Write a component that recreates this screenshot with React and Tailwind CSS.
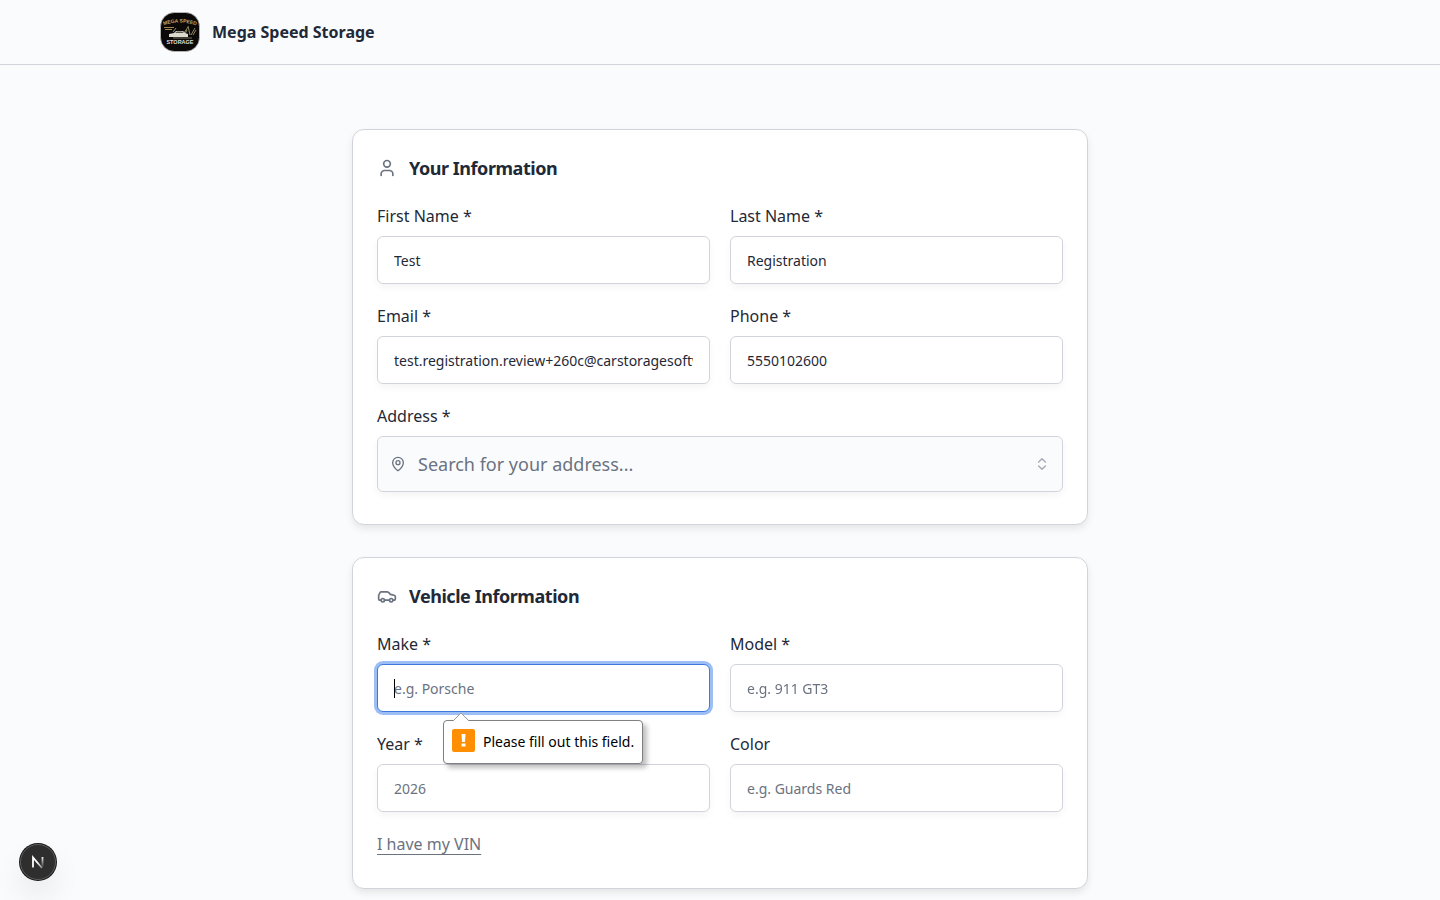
import React from "react";
import { Car, ChevronsUpDown, MapPin, User } from "lucide-react";

const inputBase =
  "h-12 w-full rounded-md border bg-white px-4 text-sm text-[#1f2937] placeholder:text-[#6b7280] outline-none";

function Field({ id, label, active, children, ...props }) {
  return (
    <div className="flex min-w-0 flex-col gap-2">
      <label htmlFor={id} className="self-start text-base">
        {label}
      </label>
      <div className="relative">
        <input
          id={id}
          className={`${inputBase} ${
            active
              ? "border-[#3b7bdc] caret-transparent ring-3 ring-[#9dbdf5]"
              : "border-[#d1d5db] shadow-[0_4px_8px_-1px_rgba(0,0,0,0.05)]"
          }`}
          {...props}
        />
        {active && (
          <span className="pointer-events-none absolute top-[15px] left-[17px] h-[19px] w-px bg-black" />
        )}
        {children}
      </div>
    </div>
  );
}

function Card({ icon: Icon, title, children }) {
  return (
    <section className="rounded-xl border border-[#d1d5db] bg-white px-6 pt-6 pb-8 shadow-[0_4px_8px_-1px_rgba(0,0,0,0.1)]">
      <div className="mb-[22px] flex items-center gap-3">
        <Icon className="size-5 text-[#6b7280]" strokeWidth={2} />
        <h2 className="text-lg font-bold tracking-tight">{title}</h2>
      </div>
      <div className="grid grid-cols-2 gap-5">{children}</div>
    </section>
  );
}

function Logo() {
  return (
    <svg viewBox="0 0 40 40" className="size-10" role="img" aria-label="Mega Speed Storage">
      <defs>
        <path id="logo-arc" d="M2 14 Q20 7 38 14" />
      </defs>
      <rect x="0.5" y="0.5" width="39" height="39" rx="14" fill="#0b0a08" stroke="#c9cacb" strokeOpacity="0.7" />
      <text fontFamily="Liberation Sans, sans-serif" fontSize="5" fontWeight="700" fill="#c4ab70" textAnchor="middle">
        <textPath href="#logo-arc" startOffset="50%">MEGA SPEED</textPath>
      </text>
      <path d="M4 15.500h10M5 17.500h7" stroke="#a1864c" strokeWidth="1.200" />
      <path d="M13 20l3-4M24 21l4-6M28 14l2 9M31 23l4-7M24 24l3-6M33 23l3-5" stroke="#a3946c" strokeWidth="0.9" />
      <path d="M9 22l5-1 2-2h7l2 2 3 1v3H9z" fill="#dcd9cf" />
      <path d="M15 21l2-1.500h5l2 1.500z" fill="#5a564b" />
      <path d="M13 26h19" stroke="#77705c" strokeWidth="1" />
      <text x="20" y="32" fontFamily="Liberation Sans, sans-serif" fontSize="5.500" fontWeight="700" fill="#e2dfd5" textAnchor="middle">
        STORAGE
      </text>
    </svg>
  );
}

// validation bubble shown under a required field
function ValidationBubble({ id, message }) {
  return (
    <div
      id={id}
      role="alert"
      className="absolute top-full left-[66px] z-10 mt-2 flex h-11 items-center gap-2 rounded border border-[#808080] bg-white px-2 text-sm whitespace-nowrap text-black shadow-[4px_4px_5px_rgba(0,0,0,0.25)]"
    >
      <svg viewBox="0 0 16 9" className="absolute -top-[9px] left-[9px] h-[9px] w-4">
        <path d="M0 9L8 1L16 9" fill="#fff" stroke="#9c9c9c" />
      </svg>
      <svg viewBox="0 0 23 23" className="-mt-1 size-[23px]" aria-hidden="true">
        <rect width="23" height="23" rx="2" fill="#ff8f00" />
        <path d="M9.500 5h4l-0.500 8h-3z" fill="#fff" />
        <path d="M9.500 14.500h4v3h-4z" fill="#fff" />
      </svg>
      <span>{message}</span>
    </div>
  );
}

export default function App() {
  return (
    <div className="min-h-screen bg-[#fafbfd] font-['Noto_Sans',sans-serif] text-[#1f2937]">
      <header className="border-b border-[#d1d5db]">
        <div className="mx-auto flex h-16 max-w-6xl items-center gap-3 px-4">
          <Logo />
          <span className="font-bold">Mega Speed Storage</span>
        </div>
      </header>

      <main className="mx-auto max-w-3xl px-4 pt-16">
        <form className="flex flex-col gap-8" noValidate>
          <Card icon={User} title="Your Information">
            <Field id="firstName" label="First Name *" defaultValue="Test" />
            <Field id="lastName" label="Last Name *" defaultValue="Registration" />
            <Field
              id="email"
              label="Email *"
              type="email"
              defaultValue="test.registration.review+260c@carstoragesoftware.com"
            />
            <Field id="phone" label="Phone *" type="tel" defaultValue="5550102600" />
            <div className="col-span-2 flex flex-col gap-2">
              <label htmlFor="address" className="self-start">
                Address *
              </label>
              <button
                id="address"
                type="button"
                className="flex h-14 w-full items-center gap-3 rounded-md border border-[#d1d5db] bg-[#fafbfd] px-3 text-lg text-[#6b7280] shadow-[0_4px_8px_-1px_rgba(0,0,0,0.05)]"
              >
                <MapPin className="size-4" />
                <span className="flex-1 text-left">Search for your address...</span>
                <ChevronsUpDown className="size-4 opacity-60" />
              </button>
            </div>
          </Card>

          <Card icon={Car} title="Vehicle Information">
            <Field
              id="make"
              label="Make *"
              placeholder="e.g. Porsche"
              aria-describedby="make-error"
              autoFocus
              active
            >
              <ValidationBubble id="make-error" message="Please fill out this field." />
            </Field>
            <Field id="model" label="Model *" placeholder="e.g. 911 GT3" />
            <Field id="year" label="Year *" placeholder="2026" />
            <Field id="color" label="Color" placeholder="e.g. Guards Red" />
            <div className="col-span-2 flex">
              <button type="button" className="text-[#6b7280] underline underline-offset-4">
                I have my VIN
              </button>
            </div>
          </Card>
        </form>
      </main>

      <button
        type="button"
        aria-label="Open Next.js Dev Tools"
        className="fixed bottom-5 left-5 flex size-9 items-center justify-center rounded-full bg-[#2e2e2e] ring-1 ring-[#171717] shadow-[0_16px_32px_-8px_rgba(0,0,0,0.24)]"
      >
        <svg viewBox="0 0 36 36" className="size-9" fill="none">
          <defs>
            <linearGradient id="n-diag" x1="18" y1="18" x2="24" y2="26" gradientUnits="userSpaceOnUse">
              <stop stopColor="#fff" />
              <stop offset="1" stopColor="#fff" stopOpacity="0.2" />
            </linearGradient>
            <linearGradient id="n-stem" x1="22" y1="12" x2="22" y2="24" gradientUnits="userSpaceOnUse">
              <stop stopColor="#fff" />
              <stop offset="1" stopColor="#fff" stopOpacity="0" />
            </linearGradient>
          </defs>
          <circle cx="18" cy="18" r="17.500" stroke="#5c5c5c" />
          <path d="M13 23.500V13.500L22 24" stroke="url(#n-diag)" strokeWidth="1.800" />
          <path d="M22.500 13v10" stroke="url(#n-stem)" strokeWidth="1.800" />
        </svg>
      </button>
    </div>
  );
}
